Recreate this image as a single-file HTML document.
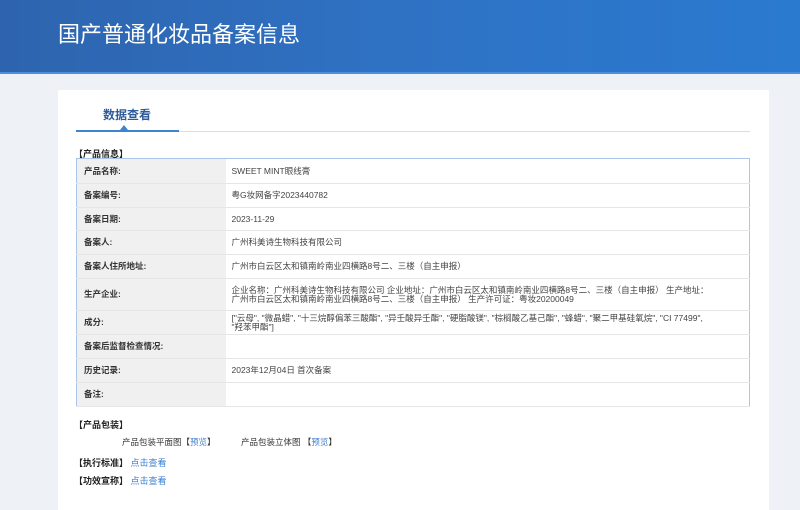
<!DOCTYPE html>
<html><head><meta charset="utf-8"><style>
*{margin:0;padding:0;box-sizing:border-box}
body{width:800px;height:501px;overflow:hidden;background:#eef2f6;font-family:"Liberation Sans","Noto Sans CJK SC",sans-serif;color:#333;position:relative}
.hdr{position:absolute;left:0;top:0;width:800px;height:74px;background:linear-gradient(90deg,#2e64ae 0%,#2f72c4 50%,#2a7ad0 100%);border-bottom:2px solid #4a90dc}
.hdr h1{position:absolute;left:58px;top:17px;font-size:22px;font-weight:normal;color:#fff;font-family:"Noto Sans CJK SC",sans-serif}
.panel{position:absolute;left:58px;top:90px;width:711px;height:420px;background:#fff}
.tab{position:absolute;left:45px;top:16px;font-size:12px;color:#2d5a9c;font-weight:bold}
.tline{position:absolute;left:18px;top:41px;width:674px;height:1px;background:#ddd}
.tblue{position:absolute;left:18px;top:40px;width:103px;height:2px;background:#3c83d0}
.tri{position:absolute;left:62px;top:35px;width:0;height:0;border-left:4px solid transparent;border-right:4px solid transparent;border-bottom:5px solid #3c83d0}
.sec{position:absolute;font-size:9px;font-weight:bold;color:#222}
table{position:absolute;left:18px;top:68px;width:674px;border-collapse:collapse;border:1px solid #a9c6ea;font-size:8.5px}
td{border-bottom:1px solid #e6e6e6;vertical-align:middle;line-height:9px}
td.l{width:149px;background:#f0f0f0;font-weight:bold;padding-left:7px;color:#333}
td.v{padding:0 40px 0 6px;color:#444}
a{color:#3a7fd0;text-decoration:none}
.t{position:absolute;font-size:8.5px;color:#333}
</style></head><body>
<div class="hdr"><h1>国产普通化妆品备案信息</h1></div>
<div class="panel">
<div class="tab">数据查看</div>
<div class="tline"></div><div class="tblue"></div><div class="tri"></div>
<div class="sec" style="left:16px;top:57px">【产品信息】</div>
<table>
<tr style="height:25px"><td class="l">产品名称:</td><td class="v">SWEET MINT眼线膏</td></tr>
<tr style="height:24px"><td class="l">备案编号:</td><td class="v">粤G妆网备字2023440782</td></tr>
<tr style="height:23px"><td class="l">备案日期:</td><td class="v">2023-11-29</td></tr>
<tr style="height:24px"><td class="l">备案人:</td><td class="v">广州科美诗生物科技有限公司</td></tr>
<tr style="height:24px"><td class="l">备案人住所地址:</td><td class="v">广州市白云区太和镇南岭南业四横路8号二、三楼（自主申报）</td></tr>
<tr style="height:32px"><td class="l">生产企业:</td><td class="v">企业名称：广州科美诗生物科技有限公司 企业地址：广州市白云区太和镇南岭南业四横路8号二、三楼（自主申报） 生产地址：广州市白云区太和镇南岭南业四横路8号二、三楼（自主申报） 生产许可证：粤妆20200049</td></tr>
<tr style="height:24px"><td class="l">成分:</td><td class="v">["云母", "微晶蜡", "十三烷醇偏苯三酸酯", "异壬酸异壬酯", "硬脂酸镁", "棕榈酸乙基己酯", "蜂蜡", "聚二甲基硅氧烷", "CI 77499", "羟苯甲酯"]</td></tr>
<tr style="height:24px"><td class="l">备案后监督检查情况:</td><td class="v"></td></tr>
<tr style="height:24px"><td class="l">历史记录:</td><td class="v">2023年12月04日 首次备案</td></tr>
<tr style="height:24px"><td class="l">备注:</td><td class="v"></td></tr>
</table>
<div class="sec" style="left:16px;top:328px">【产品包装】</div>
<div class="t" style="left:64px;top:346px">产品包装平面图【<a>预览</a>】</div>
<div class="t" style="left:183px;top:346px">产品包装立体图 【<a>预览</a>】</div>
<div class="sec" style="left:16px;top:366px">【执行标准】 <a style="font-weight:normal">点击查看</a></div>
<div class="sec" style="left:16px;top:384px">【功效宣称】 <a style="font-weight:normal">点击查看</a></div>
</div>
</body></html>
